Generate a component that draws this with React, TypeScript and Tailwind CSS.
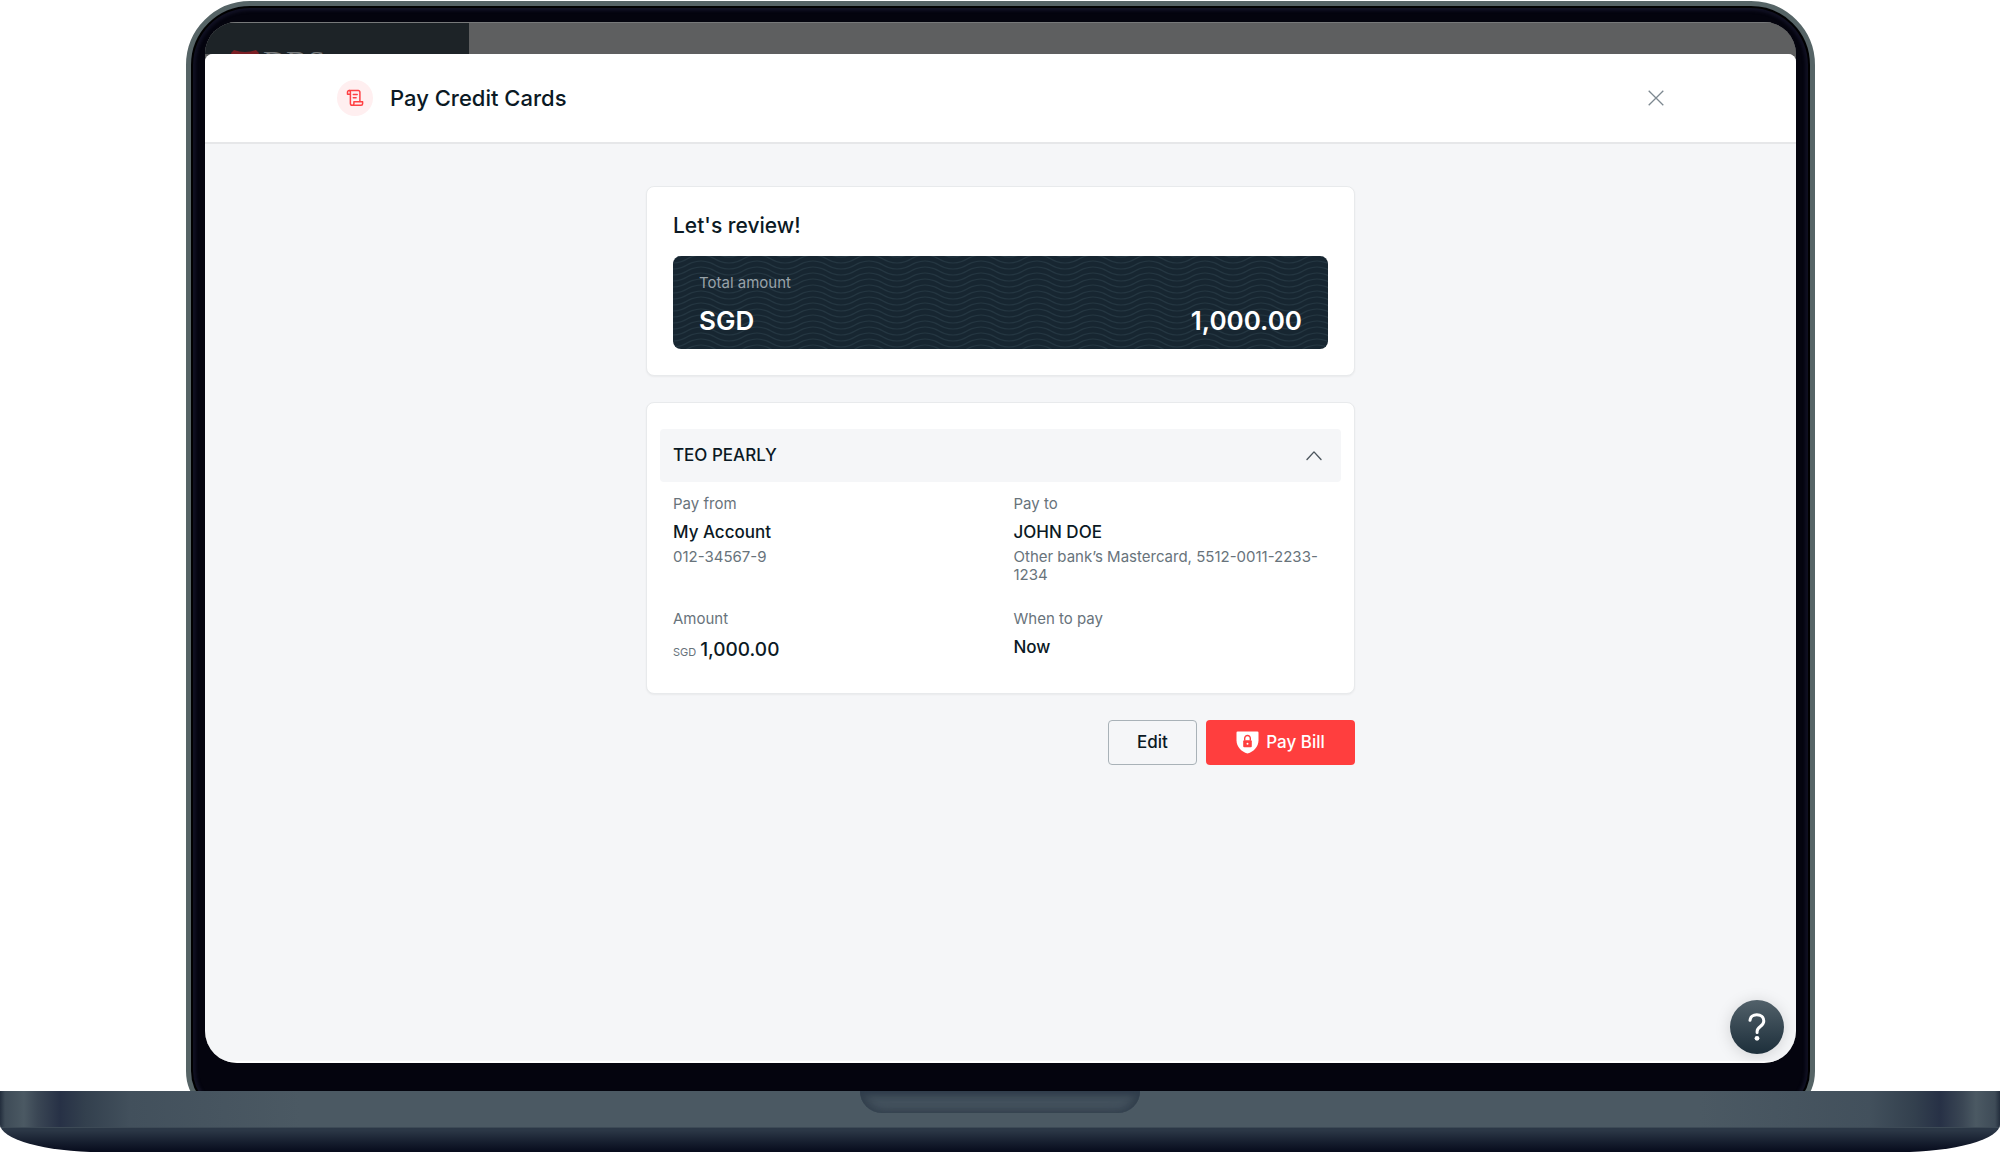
import React from "react";

const paymentData = {
  title: "Pay Credit Cards",
  currency: "SGD",
  amount: "1,000.00",
  payer: "TEO PEARLY",
};

const ScrollIcon = () => (
  <svg className="w-[18px] h-[18px]" viewBox="0 0 18 18" fill="none" stroke="#ff4144" strokeWidth="1.5" strokeLinecap="round" strokeLinejoin="round" aria-hidden="true">
    <path d="M3.9 5.2H1.5V3.2a1.6 1.6 0 0 1 1.6-1.6h9.2a1.6 1.6 0 0 1 1.6 1.6v9.4" />
    <path d="M3.1 1.6a1.3 1.3 0 0 1 1.3 1.3v11.5a1.8 1.8 0 0 0 1.8 1.8h8.9a1.5 1.5 0 0 0 1.5-1.5v-1.9H7.9v1.9a1.6 1.6 0 0 1-1.6 1.5" />
    <path d="M7.3 5.4h3.9M7.3 8.8h2.8" />
  </svg>
);

const CloseIcon = () => (
  <svg className="w-4 h-4" viewBox="0 0 16 16" fill="none" stroke="#7d8890" strokeWidth="1.3" aria-hidden="true">
    <path d="M.7.7l14.6 14.6M15.3.7L.7 15.3" />
  </svg>
);

const ChevronUp = () => (
  <svg className="w-4 h-4" viewBox="0 0 16 16" fill="none" stroke="#4c565e" strokeWidth="1.4" strokeLinecap="round" strokeLinejoin="round" aria-hidden="true">
    <path d="M1 11.5l7-7.6 7 7.6" />
  </svg>
);

const ShieldLock = () => (
  <svg className="w-[23px] h-[23px]" viewBox="0 0 23 23" aria-hidden="true">
    <path d="M1.6.6h19.8q1.1 0 1.1 1.1v7.6c0 6.4-4.6 11.4-11 13.2C5.1 20.7.5 15.7.5 9.3V1.7Q.5.6 1.6.6z" fill="#fff" />
    <rect x="7.2" y="9.2" width="8.6" height="7" rx="1" fill="#ff3e3e" />
    <path d="M8.7 9.6V7.3a2.8 2.8 0 0 1 5.6 0v2.3" fill="none" stroke="#ff3e3e" strokeWidth="1.4" />
    <circle cx="11.5" cy="12.7" r="1" fill="#fff" />
  </svg>
);

const QuestionIcon = () => (
  <svg className="w-5 h-7" viewBox="0 0 20 28" fill="none" aria-hidden="true">
    <path d="M3 7.3C3.3 3.8 6.2 1.7 9.8 1.7c4 0 7 2.5 7 6.2 0 5.7-6.7 5.5-6.7 10.6v1" stroke="#fff" strokeWidth="3" strokeLinecap="round" />
    <circle cx="10" cy="25.3" r="2.4" fill="#fff" />
  </svg>
);

const Waves = () => (
  <svg className="absolute inset-0 w-full h-full" aria-hidden="true">
    <defs>
      <pattern id="waves" width="56" height="6" patternUnits="userSpaceOnUse">
        {[-12, -6, 0, 6, 12].map((y) => (
          <path
            key={y}
            transform={`translate(0 ${y})`}
            d="M-28 -1C-14 -1 -14 7 0 7S14 -1 28 -1S42 7 56 7S70 -1 84 -1"
            fill="none"
            stroke="#243641"
            strokeWidth="1.2"
          />
        ))}
      </pattern>
    </defs>
    <rect width="100%" height="100%" fill="url(#waves)" />
  </svg>
);

type DetailProps = {
  label: string;
  note?: string;
  children: React.ReactNode;
};

const Detail = ({ label, note, children }: DetailProps) => (
  <div className="px-[13px]">
    <dt className="mb-1.5 text-[15px] leading-5 text-[#68737b]">{label}</dt>
    <dd className="text-[17px] leading-6 font-medium text-[#0b1924]">{children}</dd>
    {note && <dd className="mt-1 text-[15px] leading-[18px] text-[#68737b]">{note}</dd>}
  </div>
);

const TopBar = () => (
  <div className="flex h-8 overflow-hidden bg-[#5e5f60] border-t border-[#77797a]">
    <div className="flex w-[264px] shrink-0 items-start bg-[#1d2327] pl-[26px] pt-[27px]">
      <svg className="w-7 h-7 shrink-0" viewBox="0 0 28 28" fill="#7b1f25" aria-hidden="true">
        <path d="M3 0q11 4 22 0l3 3q-4 11 0 22l-3 3q-11-4-22 0l-3-3q4-11 0-22z" />
      </svg>
      <span className="ml-1 font-['Liberation_Serif',serif] text-[32px] leading-6 text-[#777b7d]">DBS</span>
    </div>
  </div>
);

const Header = () => (
  <header className="flex h-[90px] items-center border-b-2 border-[#e6e7e9] bg-white px-[132px]">
    <span className="mr-[17px] flex w-9 h-9 items-center justify-center rounded-full bg-[#ffeff0]">
      <ScrollIcon />
    </span>
    <h1 className="text-[22px] leading-7 font-medium text-[#0b1924]">{paymentData.title}</h1>
    <button type="button" aria-label="Close" className="ml-auto">
      <CloseIcon />
    </button>
  </header>
);

const ReviewCard = () => (
  <section className="rounded-lg border border-[#e8eaec] bg-white p-[26px] shadow-xs">
    <h2 className="mb-[17px] text-[21px] leading-[26px] font-medium text-[#0b1924]">Let's review!</h2>
    <div className="relative overflow-hidden rounded-lg bg-[#172631] px-[26px] pt-[17px] pb-3">
      <Waves />
      <div className="relative">
        <p className="text-[15px] leading-5 text-[#98a2a9]">Total amount</p>
        <p className="mt-3 flex justify-between text-[26px] leading-8 font-semibold text-white">
          <span>{paymentData.currency}</span>
          <span>{paymentData.amount}</span>
        </p>
      </div>
    </div>
  </section>
);

const DetailCard = () => (
  <section className="mt-[26px] rounded-lg border border-[#e8eaec] bg-white px-[13px] pt-[26px] pb-7 shadow-xs">
    <button
      type="button"
      aria-expanded="true"
      className="flex w-full h-[53px] items-center justify-between rounded bg-[#f5f6f8] pl-[13px] pr-[19px] text-[17px] font-medium text-[#0b1924]"
    >
      {paymentData.payer}
      <ChevronUp />
    </button>
    <dl className="mt-3 grid grid-cols-2 gap-y-[25px]">
      <Detail label="Pay from" note="012-34567-9">
        My Account
      </Detail>
      <Detail label="Pay to" note="Other bank’s Mastercard, 5512-0011-2233-1234">
        JOHN DOE
      </Detail>
      <Detail label="Amount">
        <span className="mr-1 text-[11px] font-normal text-[#68737b]">{paymentData.currency}</span>
        <span className="text-[19px] leading-[30px]">{paymentData.amount}</span>
      </Detail>
      <Detail label="When to pay">Now</Detail>
    </dl>
  </section>
);

const Actions = () => (
  <div className="mt-[26px] flex justify-end gap-[9px] text-[17px] font-medium">
    <button type="button" className="h-[45px] w-[89px] rounded border border-[#a9b2b8] text-[#0b1924]">
      Edit
    </button>
    <button type="button" className="flex h-[45px] w-[149px] items-center justify-center gap-[7px] rounded bg-[#ff3e3e] text-white">
      <ShieldLock />
      Pay Bill
    </button>
  </div>
);

const LaptopBase = () => (
  <div className="relative flex h-[61px] flex-col overflow-hidden rounded-b-[100px_28px] bg-linear-to-b from-[#2b3746] from-65% to-[#070b1c]">
    {/*---- hinge strip ----*/}
    <div className="flex h-[37px] shrink-0 justify-center border-b border-[#3d4a56] bg-[linear-gradient(to_right,#232e3d_0,#3e4b57_5px,#4b5963_24px,#3a4654_38px,#273146_60px,#33404e_85px,#42505c_130px,#4b5963_300px,#4b5963_calc(100%-300px),#42505c_calc(100%-130px),#33404e_calc(100%-85px),#273146_calc(100%-60px),#3a4654_calc(100%-38px),#4b5963_calc(100%-24px),#3e4b57_calc(100%-5px),#232e3d_100%)]">
      <div className="h-[22px] w-[280px] rounded-b-[22px] bg-[#43515d] shadow-[inset_0_3px_6px_#2f3c4b,inset_6px_0_8px_#35424f,inset_-6px_0_8px_#35424f]" />
    </div>
  </div>
);

const App = () => {
  return (
    <div className="flex min-h-screen flex-col bg-white pt-px font-['Inter','Liberation_Sans',sans-serif]">
      {/*---- laptop lid ----*/}
      <div className="ml-[9.3%] mr-[9.25%] -mb-7 flex flex-1 flex-col rounded-t-[64px] rounded-b-[48px] border-[5px] border-[#566466] bg-[#04040e] px-3.5 pt-4 pb-[51px] shadow-[inset_0_0_0_2px_#000,inset_0_0_3px_5px_#101022]">
        <div className="relative flex flex-1 flex-col overflow-hidden rounded-[32px] bg-[#5e5f60]">
          <TopBar />
          <div className="flex flex-1 flex-col overflow-hidden rounded-t-lg border-b-2 border-white bg-[#f5f6f8]">
            <Header />
            <main className="mx-auto w-full max-w-[709px] pt-[42px] pb-12">
              <ReviewCard />
              <DetailCard />
              <Actions />
            </main>
          </div>
          <button
            type="button"
            aria-label="Help"
            className="absolute right-3 bottom-[9px] flex h-[54px] w-[54px] items-center justify-center rounded-full bg-linear-to-b from-[#52616a] to-[#1d2f3b] shadow-[0_2px_16px_#00000026]"
          >
            <QuestionIcon />
          </button>
        </div>
      </div>
      {/*---- laptop base ----*/}
      <LaptopBase />
    </div>
  );
};

export default App;
